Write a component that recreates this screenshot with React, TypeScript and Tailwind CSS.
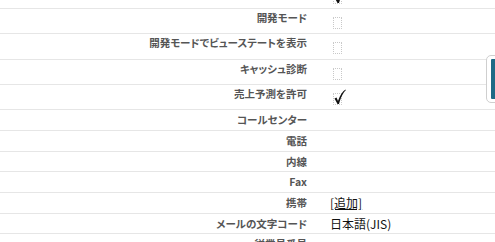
import React from 'react';

type Row = {
  label: string;
  h: string;
  kind: 'check' | 'checked' | 'text' | 'none';
  value?: React.ReactNode;
};

const rows: Row[] = [
  { label: '', h: 'h-[25px]', kind: 'checked' },
  { label: '開発モード', h: 'h-[25px]', kind: 'check' },
  { label: '開発モードでビューステートを表示', h: 'h-[26px]', kind: 'check' },
  { label: 'キャッシュ診断', h: 'h-[25px]', kind: 'check' },
  { label: '売上予測を許可', h: 'h-[25px]', kind: 'checked' },
  { label: 'コールセンター', h: 'h-[21px]', kind: 'none' },
  { label: '電話', h: 'h-[21px]', kind: 'none' },
  { label: '内線', h: 'h-[20px]', kind: 'none' },
  { label: 'Fax', h: 'h-[21px]', kind: 'none' },
  { label: '携帯', h: 'h-[21px]', kind: 'text', value: <span className="underline">[追加]</span> },
  { label: 'メールの文字コード', h: 'h-[20px]', kind: 'text', value: '日本語(JIS)' },
  { label: '従業員番号', h: 'h-[21px]', kind: 'none' },
];

function Checkbox({ checked }: { checked?: boolean }) {
  return (
    <div className="relative w-[9px] h-[12px] border border-dotted border-[#c8c8c8] rounded-[1px]">
      {checked && (
        <svg className="absolute left-[-1px] top-[-5px]" width="14" height="16" viewBox="0 0 14 16">
          <path d="M1.5 9.5 L3.5 8.5 L5 12 C7 6 9.5 2.5 12.5 0.5 L12.8 1.2 C10 4 8 8 6 15 L4.5 15 Z" fill="#111" />
        </svg>
      )}
    </div>
  );
}

export default function App() {
  return (
    <div className="relative w-[495px] h-[242px] overflow-hidden bg-white [font-family:'Noto_Sans_CJK_JP','Liberation_Sans',sans-serif] [font-feature-settings:'palt']">
      <div className="mt-[-16px]">
        {rows.map((r, i) => (
          <div key={i} className={`flex border-b border-[#e6e6e6] ${r.h}`}>
            <div
              className={`w-[307px] shrink-0 text-right text-[10.5px] font-bold text-[#555] leading-none ${
                r.kind === 'check' || r.kind === 'checked' ? 'pt-[4px]' : 'pt-[5px]'
              }`}
            >
              {r.label}
            </div>
            <div className="pl-[26px]">
              {(r.kind === 'check' || r.kind === 'checked') && (
                <div className="pt-[8px]">
                  <Checkbox checked={r.kind === 'checked'} />
                </div>
              )}
              {r.kind === 'text' && (
                <div className="pl-[-3px] pt-[2px] ml-[-3px] text-[12px] leading-[16px] text-[#111]">{r.value}</div>
              )}
            </div>
          </div>
        ))}
      </div>
      <div className="absolute left-[486px] top-[55px] w-[14px] h-[48px] rounded-l-[5px] border border-[#cfcfcf] bg-white pl-[4px] py-[3px]">
        <div className="w-full h-full bg-[#1d6a86] rounded-l-[1px]" />
      </div>
    </div>
  );
}
